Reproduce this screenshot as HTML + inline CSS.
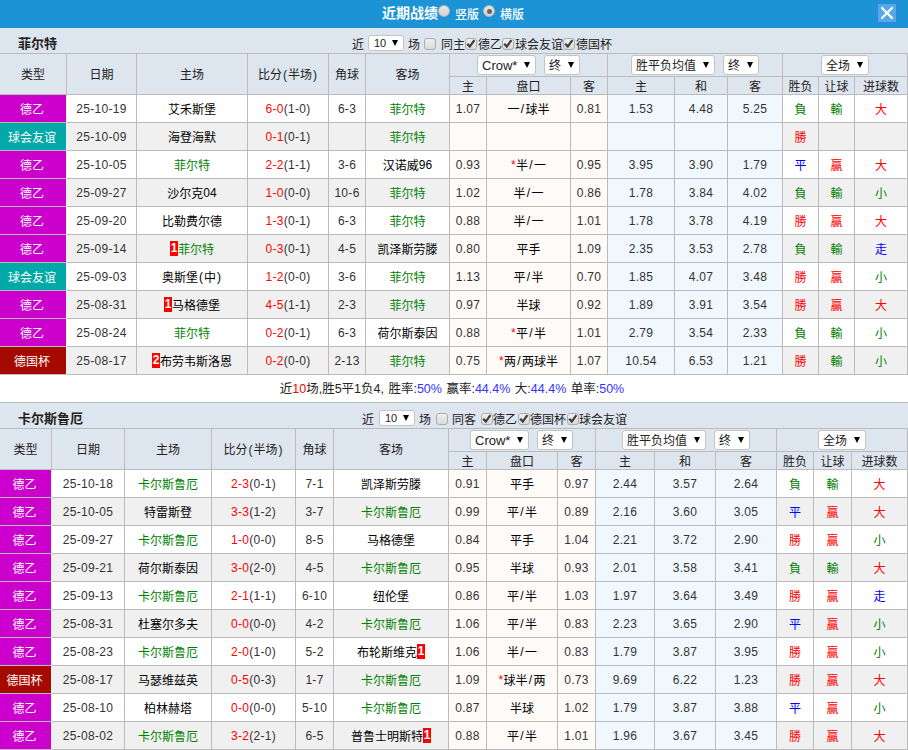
<!DOCTYPE html>
<html lang="zh-CN"><head><meta charset="utf-8"><title>近期战绩</title>
<style>
html,body{margin:0;padding:0}
body{width:908px;height:750px;overflow:hidden;background:#fff;position:relative;font-family:"Liberation Sans","Noto Sans CJK SC",sans-serif;font-size:12px;color:#333}
.bar{position:absolute;left:0;top:0;width:908px;height:28px;background:#1b93d5}
.bar b{position:absolute;left:382px;top:3px;font-size:14px;line-height:20px;color:#fff;font-weight:bold;font-family:"Liberation Sans","Noto Sans CJK SC",sans-serif}
.bar span{position:absolute;top:7px;line-height:16px;color:#fff;font-size:12px;font-weight:500}
.rd{position:absolute;top:5px;width:12px;height:12px;border-radius:50%;box-sizing:border-box;border:1px solid #b4b4b4;background:linear-gradient(#e6e6e6,#d4d4d4)}
.rd.on:after{content:"";position:absolute;left:2.5px;top:2.5px;width:5px;height:5px;border-radius:50%;background:#666}
.cl{position:absolute;left:876px;top:2px;width:22px;height:22px;box-sizing:border-box;border:2px solid #2a8ae0;background:#55a8ea}
.sec{position:absolute;left:0;width:908px;height:25px;background:#dde5ee}
.sec b{position:absolute;left:18px;top:8px;font-size:13px;line-height:16px;color:#222;font-weight:bold;font-family:"Liberation Sans","Noto Sans CJK SC",sans-serif}
.ft{position:absolute;line-height:14px;font-size:12px;color:#222;margin-top:10px;white-space:nowrap}
.cb{position:absolute;width:12px;height:12px;box-sizing:border-box;border:1px solid #acacac;border-radius:3px;background:linear-gradient(#efefef,#dadada)}
.cb svg{position:absolute;left:-1px;top:-1px}
.sel{position:absolute;height:20px;box-sizing:border-box;border:1px solid #c4c4c4;border-radius:3px;background:#fff;color:#222;font-size:12px;line-height:21px;padding-left:4px;white-space:nowrap}
.sel u{text-decoration:none;font-size:13px;position:relative;top:-1px}
.sel i{position:absolute;right:5px;top:6px;width:0;height:0;border-left:3.5px solid transparent;border-right:3.5px solid transparent;border-top:6px solid #000}
.sel.s10{height:16px;line-height:15px;font-size:11px;padding-left:5px}
.sel.s10 i{top:4px;right:5px}
table.tb{position:absolute;left:0;width:908px;table-layout:fixed;border-collapse:separate;border-spacing:0;border-top:1px solid #bbb}
.tb th,.tb td{box-sizing:border-box;border-right:1px solid #bbb;border-bottom:1px solid #bbb;padding:0;text-align:center;font-weight:normal;font-size:12px;white-space:nowrap;overflow:hidden}
.tb th{background:#dde5ee;color:#222}
.tb tr.h1 th{height:41px;padding-top:0;padding-bottom:2px}
.tb tr.h1 th.sl{height:23px;padding:0}
.tb tr.h2 th{height:18px;line-height:14px;padding-top:3px}
.tb td{height:28px;line-height:23px;padding-top:4px;color:#000}
.tb td.n,.tb td.sc{line-height:25px;padding-top:2px}
.up{position:relative;top:-1px}
.pr{display:inline-block;width:6px;text-align:center}
.tb tr.od td{background:#fff}
.tb tr.ev td{background:#f0f0f0}
.tb tr td.a{background:#fdfaf8}
.tb tr td.e{background:#f0f8fd}
.tb td.n,.tb .n{color:#333;letter-spacing:.3px}
.tb td .r{letter-spacing:.3px}
.sh{display:inline-block;width:6px;text-align:center;position:relative;top:-1px}
.tb tr td.ty{color:#fff;border-right-color:#f4f4f4;padding-right:2px}
.tb tr td.t1{background:#cc00cc}
.tb tr td.t2{background:#00a8a8}
.tb tr td.t3{background:#a50a00}
.g{color:#008000}.k{color:#000}.r{color:#f00}.b{color:#00f}
.tc{font-family:"Liberation Sans","Noto Sans CJK TC",sans-serif}
.cd{background:#f00;color:#fff;font-weight:bold;display:inline-block;line-height:15px;height:15px;padding:0 .7px;vertical-align:0px;position:relative;top:-2px}
.sum{position:absolute;left:0;top:375px;width:904px;height:27px;line-height:29px;text-align:center;color:#222;font-size:12.5px;word-spacing:1px;padding-right:4px;border-bottom:1px solid #bbb;background:#fff}
.sum .b{color:#33f}
</style></head><body>
<div class="bar"><b>近期战绩</b><i class="rd" style="left:438px"></i><span style="left:455px">竖版</span><i class="rd on" style="left:483px"></i><span style="left:500px">横版</span>
<div class="cl"><svg width="18" height="18" viewBox="0 0 18 18" style="display:block"><path d="M4 4 L14 14 M14 4 L4 14" stroke="#fff" stroke-width="2.2" stroke-linecap="round" fill="none"/></svg></div></div>
<div class="sec" style="top:28px"><b>菲尔特</b></div>
<span class="ft" style="left:352px;top:28px">近</span>
<div class="sel s10" style="left:368px;top:35px;width:36px">10<i></i></div>
<span class="ft" style="left:408px;top:28px">场</span>
<span class="cb" style="left:424px;top:38px"></span>
<span class="ft" style="left:441px;top:28px">同主</span>
<span class="cb on" style="left:465px;top:38px"><svg viewBox="0 0 12 12" width="12" height="12"><path d="M2.2 5.8 L4.8 8.6 L9.4 2.2" fill="none" stroke="#3c3c3c" stroke-width="2.2"/></svg></span>
<span class="ft" style="left:478px;top:28px">德乙</span>
<span class="cb on" style="left:502px;top:38px"><svg viewBox="0 0 12 12" width="12" height="12"><path d="M2.2 5.8 L4.8 8.6 L9.4 2.2" fill="none" stroke="#3c3c3c" stroke-width="2.2"/></svg></span>
<span class="ft" style="left:515px;top:28px">球会友谊</span>
<span class="cb on" style="left:563px;top:38px"><svg viewBox="0 0 12 12" width="12" height="12"><path d="M2.2 5.8 L4.8 8.6 L9.4 2.2" fill="none" stroke="#3c3c3c" stroke-width="2.2"/></svg></span>
<span class="ft" style="left:576px;top:28px">德国杯</span>
<table class="tb" style="top:53px"><colgroup>
<col style="width:67px">
<col style="width:70px">
<col style="width:111px">
<col style="width:81px">
<col style="width:37px">
<col style="width:84px">
<col style="width:37px">
<col style="width:84px">
<col style="width:37px">
<col style="width:67px">
<col style="width:53px">
<col style="width:55px">
<col style="width:36px">
<col style="width:36px">
<col style="width:53px">
</colgroup>
<tr class="h1"><th rowspan="2">类型</th><th rowspan="2">日期</th><th rowspan="2">主场</th><th rowspan="2">比分<span class="pr">(</span>半场<span class="pr">)</span></th><th rowspan="2">角球</th><th rowspan="2">客场</th><th colspan="3" class="sl"></th><th colspan="3" class="sl"></th><th colspan="3" class="sl"></th></tr>
<tr class="h2"><th>主</th><th>盘口</th><th>客</th><th>主</th><th>和</th><th>客</th><th>胜负</th><th>让球</th><th>进球数</th></tr>
<tr class="od"><td class="ty t1">德乙</td><td class="n">25-10-19</td><td><span class="k">艾禾斯堡</span></td><td class="sc"><span class="r">6-0</span><span class="n">(1-0)</span></td><td class="n">6-3</td><td><span class="g">菲尔特</span></td><td class="a n">1.07</td><td class="a">一<span class="sh">/</span>球半</td><td class="a n">0.81</td><td class="e n">1.53</td><td class="e n">4.48</td><td class="e n">5.25</td><td><span class="tc g">負</span></td><td><span class="tc g">輸</span></td><td><span class="tc r">大</span></td></tr>
<tr class="ev"><td class="ty t2">球会友谊</td><td class="n">25-10-09</td><td><span class="k">海登海默</span></td><td class="sc"><span class="r">0-1</span><span class="n">(0-1)</span></td><td class="n"></td><td><span class="g">菲尔特</span></td><td class="a n"></td><td class="a"></td><td class="a n"></td><td class="e n"></td><td class="e n"></td><td class="e n"></td><td><span class="tc r">勝</span></td><td></td><td></td></tr>
<tr class="od"><td class="ty t1">德乙</td><td class="n">25-10-05</td><td><span class="g">菲尔特</span></td><td class="sc"><span class="r">2-2</span><span class="n">(1-1)</span></td><td class="n">3-6</td><td><span class="k">汉诺威<span class="up">96</span></span></td><td class="a n">0.93</td><td class="a"><span class="r up">*</span>半<span class="sh">/</span>一</td><td class="a n">0.95</td><td class="e n">3.95</td><td class="e n">3.90</td><td class="e n">1.79</td><td><span class="tc b">平</span></td><td><span class="tc r">贏</span></td><td><span class="tc r">大</span></td></tr>
<tr class="ev"><td class="ty t1">德乙</td><td class="n">25-09-27</td><td><span class="k">沙尔克<span class="up">04</span></span></td><td class="sc"><span class="r">1-0</span><span class="n">(0-0)</span></td><td class="n">10-6</td><td><span class="g">菲尔特</span></td><td class="a n">1.02</td><td class="a">半<span class="sh">/</span>一</td><td class="a n">0.86</td><td class="e n">1.78</td><td class="e n">3.84</td><td class="e n">4.02</td><td><span class="tc g">負</span></td><td><span class="tc g">輸</span></td><td><span class="tc g">小</span></td></tr>
<tr class="od"><td class="ty t1">德乙</td><td class="n">25-09-20</td><td><span class="k">比勒费尔德</span></td><td class="sc"><span class="r">1-3</span><span class="n">(0-1)</span></td><td class="n">6-3</td><td><span class="g">菲尔特</span></td><td class="a n">0.88</td><td class="a">半<span class="sh">/</span>一</td><td class="a n">1.01</td><td class="e n">1.78</td><td class="e n">3.78</td><td class="e n">4.19</td><td><span class="tc r">勝</span></td><td><span class="tc r">贏</span></td><td><span class="tc r">大</span></td></tr>
<tr class="ev"><td class="ty t1">德乙</td><td class="n">25-09-14</td><td><span class="cd">1</span><span class="g">菲尔特</span></td><td class="sc"><span class="r">0-3</span><span class="n">(0-1)</span></td><td class="n">4-5</td><td><span class="k">凯泽斯劳滕</span></td><td class="a n">0.80</td><td class="a">平手</td><td class="a n">1.09</td><td class="e n">2.35</td><td class="e n">3.53</td><td class="e n">2.78</td><td><span class="tc g">負</span></td><td><span class="tc g">輸</span></td><td><span class="tc b">走</span></td></tr>
<tr class="od"><td class="ty t2">球会友谊</td><td class="n">25-09-03</td><td><span class="k">奥斯堡<span class="pr up">(</span>中<span class="pr up">)</span></span></td><td class="sc"><span class="r">1-2</span><span class="n">(0-0)</span></td><td class="n">3-6</td><td><span class="g">菲尔特</span></td><td class="a n">1.13</td><td class="a">平<span class="sh">/</span>半</td><td class="a n">0.70</td><td class="e n">1.85</td><td class="e n">4.07</td><td class="e n">3.48</td><td><span class="tc r">勝</span></td><td><span class="tc r">贏</span></td><td><span class="tc g">小</span></td></tr>
<tr class="ev"><td class="ty t1">德乙</td><td class="n">25-08-31</td><td><span class="cd">1</span><span class="k">马格德堡</span></td><td class="sc"><span class="r">4-5</span><span class="n">(1-1)</span></td><td class="n">2-3</td><td><span class="g">菲尔特</span></td><td class="a n">0.97</td><td class="a">半球</td><td class="a n">0.92</td><td class="e n">1.89</td><td class="e n">3.91</td><td class="e n">3.54</td><td><span class="tc r">勝</span></td><td><span class="tc r">贏</span></td><td><span class="tc r">大</span></td></tr>
<tr class="od"><td class="ty t1">德乙</td><td class="n">25-08-24</td><td><span class="g">菲尔特</span></td><td class="sc"><span class="r">0-2</span><span class="n">(0-1)</span></td><td class="n">6-3</td><td><span class="k">荷尔斯泰因</span></td><td class="a n">0.88</td><td class="a"><span class="r up">*</span>平<span class="sh">/</span>半</td><td class="a n">1.01</td><td class="e n">2.79</td><td class="e n">3.54</td><td class="e n">2.33</td><td><span class="tc g">負</span></td><td><span class="tc g">輸</span></td><td><span class="tc g">小</span></td></tr>
<tr class="ev"><td class="ty t3">德国杯</td><td class="n">25-08-17</td><td><span class="cd">2</span><span class="k">布劳韦斯洛恩</span></td><td class="sc"><span class="r">0-2</span><span class="n">(0-0)</span></td><td class="n">2-13</td><td><span class="g">菲尔特</span></td><td class="a n">0.75</td><td class="a"><span class="r up">*</span>两<span class="sh">/</span>两球半</td><td class="a n">1.07</td><td class="e n">10.54</td><td class="e n">6.53</td><td class="e n">1.21</td><td><span class="tc r">勝</span></td><td><span class="tc g">輸</span></td><td><span class="tc g">小</span></td></tr>
</table>
<div class="sel" style="left:477px;top:55px;width:59px"><u>Crow*</u><i></i></div>
<div class="sel" style="left:544px;top:55px;width:36px">终<i></i></div>
<div class="sel" style="left:631px;top:55px;width:84px">胜平负均值<i></i></div>
<div class="sel" style="left:723px;top:55px;width:36px">终<i></i></div>
<div class="sel" style="left:821px;top:55px;width:48px">全场<i></i></div>
<div class="sum">近<span class="r">10</span>场,胜5平1负4, 胜率:<span class="b">50%</span> 赢率:<span class="b">44.4%</span> 大:<span class="b">44.4%</span> 单率:<span class="b">50%</span></div>
<div class="sec" style="top:403px"><b>卡尔斯鲁厄</b></div>
<span class="ft" style="left:362px;top:403px">近</span>
<div class="sel s10" style="left:379px;top:410px;width:36px">10<i></i></div>
<span class="ft" style="left:419px;top:403px">场</span>
<span class="cb" style="left:436px;top:413px"></span>
<span class="ft" style="left:452px;top:403px">同客</span>
<span class="cb on" style="left:481px;top:413px"><svg viewBox="0 0 12 12" width="12" height="12"><path d="M2.2 5.8 L4.8 8.6 L9.4 2.2" fill="none" stroke="#3c3c3c" stroke-width="2.2"/></svg></span>
<span class="ft" style="left:493px;top:403px">德乙</span>
<span class="cb on" style="left:518px;top:413px"><svg viewBox="0 0 12 12" width="12" height="12"><path d="M2.2 5.8 L4.8 8.6 L9.4 2.2" fill="none" stroke="#3c3c3c" stroke-width="2.2"/></svg></span>
<span class="ft" style="left:530px;top:403px">德国杯</span>
<span class="cb on" style="left:567px;top:413px"><svg viewBox="0 0 12 12" width="12" height="12"><path d="M2.2 5.8 L4.8 8.6 L9.4 2.2" fill="none" stroke="#3c3c3c" stroke-width="2.2"/></svg></span>
<span class="ft" style="left:579px;top:403px">球会友谊</span>
<table class="tb" style="top:428px"><colgroup>
<col style="width:52px">
<col style="width:73px">
<col style="width:87px">
<col style="width:84px">
<col style="width:38px">
<col style="width:115px">
<col style="width:38px">
<col style="width:71px">
<col style="width:38px">
<col style="width:59px">
<col style="width:61px">
<col style="width:61px">
<col style="width:37px">
<col style="width:38px">
<col style="width:56px">
</colgroup>
<tr class="h1"><th rowspan="2">类型</th><th rowspan="2">日期</th><th rowspan="2">主场</th><th rowspan="2">比分<span class="pr">(</span>半场<span class="pr">)</span></th><th rowspan="2">角球</th><th rowspan="2">客场</th><th colspan="3" class="sl"></th><th colspan="3" class="sl"></th><th colspan="3" class="sl"></th></tr>
<tr class="h2"><th>主</th><th>盘口</th><th>客</th><th>主</th><th>和</th><th>客</th><th>胜负</th><th>让球</th><th>进球数</th></tr>
<tr class="od"><td class="ty t1">德乙</td><td class="n">25-10-18</td><td><span class="g">卡尔斯鲁厄</span></td><td class="sc"><span class="r">2-3</span><span class="n">(0-1)</span></td><td class="n">7-1</td><td><span class="k">凯泽斯劳滕</span></td><td class="a n">0.91</td><td class="a">平手</td><td class="a n">0.97</td><td class="e n">2.44</td><td class="e n">3.57</td><td class="e n">2.64</td><td><span class="tc g">負</span></td><td><span class="tc g">輸</span></td><td><span class="tc r">大</span></td></tr>
<tr class="ev"><td class="ty t1">德乙</td><td class="n">25-10-05</td><td><span class="k">特雷斯登</span></td><td class="sc"><span class="r">3-3</span><span class="n">(1-2)</span></td><td class="n">3-7</td><td><span class="g">卡尔斯鲁厄</span></td><td class="a n">0.99</td><td class="a">平<span class="sh">/</span>半</td><td class="a n">0.89</td><td class="e n">2.16</td><td class="e n">3.60</td><td class="e n">3.05</td><td><span class="tc b">平</span></td><td><span class="tc r">贏</span></td><td><span class="tc r">大</span></td></tr>
<tr class="od"><td class="ty t1">德乙</td><td class="n">25-09-27</td><td><span class="g">卡尔斯鲁厄</span></td><td class="sc"><span class="r">1-0</span><span class="n">(0-0)</span></td><td class="n">8-5</td><td><span class="k">马格德堡</span></td><td class="a n">0.84</td><td class="a">平手</td><td class="a n">1.04</td><td class="e n">2.21</td><td class="e n">3.72</td><td class="e n">2.90</td><td><span class="tc r">勝</span></td><td><span class="tc r">贏</span></td><td><span class="tc g">小</span></td></tr>
<tr class="ev"><td class="ty t1">德乙</td><td class="n">25-09-21</td><td><span class="k">荷尔斯泰因</span></td><td class="sc"><span class="r">3-0</span><span class="n">(2-0)</span></td><td class="n">4-5</td><td><span class="g">卡尔斯鲁厄</span></td><td class="a n">0.95</td><td class="a">半球</td><td class="a n">0.93</td><td class="e n">2.01</td><td class="e n">3.58</td><td class="e n">3.41</td><td><span class="tc g">負</span></td><td><span class="tc g">輸</span></td><td><span class="tc r">大</span></td></tr>
<tr class="od"><td class="ty t1">德乙</td><td class="n">25-09-13</td><td><span class="g">卡尔斯鲁厄</span></td><td class="sc"><span class="r">2-1</span><span class="n">(1-1)</span></td><td class="n">6-10</td><td><span class="k">纽伦堡</span></td><td class="a n">0.86</td><td class="a">平<span class="sh">/</span>半</td><td class="a n">1.03</td><td class="e n">1.97</td><td class="e n">3.64</td><td class="e n">3.49</td><td><span class="tc r">勝</span></td><td><span class="tc r">贏</span></td><td><span class="tc b">走</span></td></tr>
<tr class="ev"><td class="ty t1">德乙</td><td class="n">25-08-31</td><td><span class="k">杜塞尔多夫</span></td><td class="sc"><span class="r">0-0</span><span class="n">(0-0)</span></td><td class="n">4-2</td><td><span class="g">卡尔斯鲁厄</span></td><td class="a n">1.06</td><td class="a">平<span class="sh">/</span>半</td><td class="a n">0.83</td><td class="e n">2.23</td><td class="e n">3.65</td><td class="e n">2.90</td><td><span class="tc b">平</span></td><td><span class="tc r">贏</span></td><td><span class="tc g">小</span></td></tr>
<tr class="od"><td class="ty t1">德乙</td><td class="n">25-08-23</td><td><span class="g">卡尔斯鲁厄</span></td><td class="sc"><span class="r">2-0</span><span class="n">(1-0)</span></td><td class="n">5-2</td><td><span class="k">布轮斯维克</span><span class="cd">1</span></td><td class="a n">1.06</td><td class="a">半<span class="sh">/</span>一</td><td class="a n">0.83</td><td class="e n">1.79</td><td class="e n">3.87</td><td class="e n">3.95</td><td><span class="tc r">勝</span></td><td><span class="tc r">贏</span></td><td><span class="tc g">小</span></td></tr>
<tr class="ev"><td class="ty t3">德国杯</td><td class="n">25-08-17</td><td><span class="k">马瑟维兹英</span></td><td class="sc"><span class="r">0-5</span><span class="n">(0-3)</span></td><td class="n">1-7</td><td><span class="g">卡尔斯鲁厄</span></td><td class="a n">1.09</td><td class="a"><span class="r up">*</span>球半<span class="sh">/</span>两</td><td class="a n">0.73</td><td class="e n">9.69</td><td class="e n">6.22</td><td class="e n">1.23</td><td><span class="tc r">勝</span></td><td><span class="tc r">贏</span></td><td><span class="tc r">大</span></td></tr>
<tr class="od"><td class="ty t1">德乙</td><td class="n">25-08-10</td><td><span class="k">柏林赫塔</span></td><td class="sc"><span class="r">0-0</span><span class="n">(0-0)</span></td><td class="n">5-10</td><td><span class="g">卡尔斯鲁厄</span></td><td class="a n">0.87</td><td class="a">半球</td><td class="a n">1.02</td><td class="e n">1.79</td><td class="e n">3.87</td><td class="e n">3.88</td><td><span class="tc b">平</span></td><td><span class="tc r">贏</span></td><td><span class="tc g">小</span></td></tr>
<tr class="ev"><td class="ty t1">德乙</td><td class="n">25-08-02</td><td><span class="g">卡尔斯鲁厄</span></td><td class="sc"><span class="r">3-2</span><span class="n">(2-1)</span></td><td class="n">6-5</td><td><span class="k">普鲁士明斯特</span><span class="cd">1</span></td><td class="a n">0.88</td><td class="a">平<span class="sh">/</span>半</td><td class="a n">1.01</td><td class="e n">1.96</td><td class="e n">3.67</td><td class="e n">3.45</td><td><span class="tc r">勝</span></td><td><span class="tc r">贏</span></td><td><span class="tc r">大</span></td></tr>
</table>
<div class="sel" style="left:470px;top:430px;width:59px"><u>Crow*</u><i></i></div>
<div class="sel" style="left:537px;top:430px;width:36px">终<i></i></div>
<div class="sel" style="left:622px;top:430px;width:84px">胜平负均值<i></i></div>
<div class="sel" style="left:714px;top:430px;width:36px">终<i></i></div>
<div class="sel" style="left:818px;top:430px;width:48px">全场<i></i></div>
</body></html>
